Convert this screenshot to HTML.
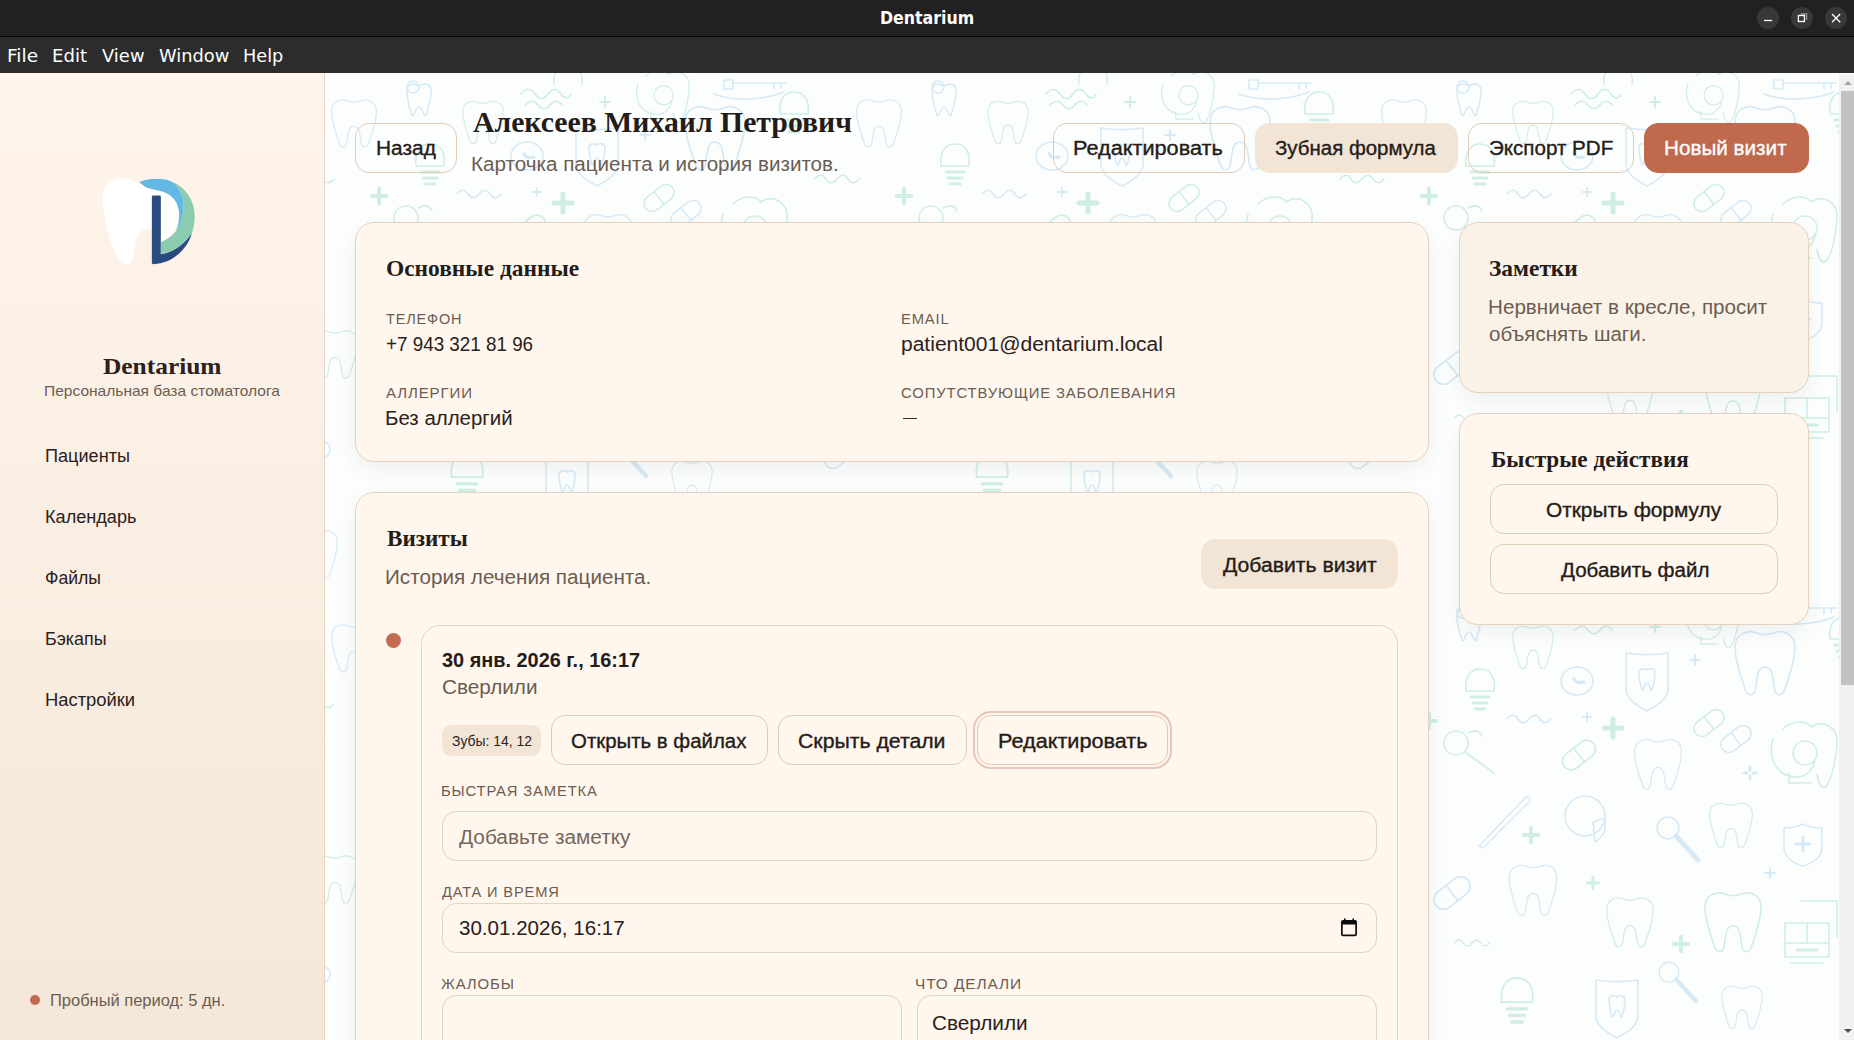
<!DOCTYPE html>
<html lang="ru">
<head>
<meta charset="utf-8">
<title>Dentarium</title>
<style>
*{box-sizing:border-box;margin:0;padding:0}
html,body{width:1854px;height:1040px;overflow:hidden;background:#fdfefe}
body{font-family:"Liberation Sans",sans-serif;color:#2a211c;position:relative}
.abs{position:absolute}
.t{position:absolute;white-space:nowrap;line-height:1;transform-origin:0 50%}
#titlebar{left:0;top:0;width:1854px;height:36px;background:#212121}
#titleline{left:0;top:36px;width:1854px;height:1px;background:#050505}
#menubar{left:0;top:37px;width:1854px;height:36px;background:#2c2c2c}
.wbtn{width:22px;height:22px;border-radius:50%;background:#383838;top:7px}
#sidebar{left:0;top:73px;width:324px;height:967px;background:linear-gradient(180deg,#fff5ec 0%,#f5e7d8 100%)}
#sideborder{left:324px;top:73px;width:1px;height:967px;background:#e6d5c2}
#main{left:325px;top:73px;width:1514px;height:967px;overflow:hidden;background:#fdfefe}
#scroll{left:1839px;top:74px;width:15px;height:966px;background:#f1f1f1}
#thumb{left:1841px;top:91px;width:13px;height:594px;background:#c1c1c1}
.card{position:absolute;background:#fff6ed;border:1px solid #e4d2bd;border-radius:19px;box-shadow:0 8px 20px rgba(60,45,30,.065)}
.btn{position:absolute;height:50px;border-radius:14px;border:1px solid #dfcbb6}
.btn.sec{background:#f3e5d6;border-color:#f3e5d6}
.btn.pri{background:#c0694c;border-color:#c0694c}
.field{position:absolute;border:1px solid #e4d3bf;border-radius:14px;background:#fff6ed}
</style>
</head>
<body>
<!-- window chrome -->
<div id="titlebar" class="abs"></div>
<div id="titleline" class="abs"></div>
<div id="menubar" class="abs"></div>
<div class="abs wbtn" style="left:1757px"></div>
<div class="abs wbtn" style="left:1791px"></div>
<div class="abs wbtn" style="left:1825px"></div>
<svg class="abs" style="left:1757px;top:7px" width="90" height="22" viewBox="0 0 90 22" fill="none" stroke="#fff" stroke-width="1.3">
<path d="M7 13.5H15.2"/>
<path d="M43.6 7H49.6V13" stroke="#9a9a9a"/>
<rect x="41.4" y="8.5" width="6" height="6"/>
<path d="M75 7L83.2 15.2M83.2 7L75 15.2"/>
</svg>

<!-- sidebar -->
<div id="sidebar" class="abs"></div>
<div id="sideborder" class="abs"></div>
<svg class="abs" style="left:90px;top:165px" width="120" height="110" viewBox="0 0 1135 1040">
<path fill="#ffffff" d="M120 320C120 200 200 128 290 128C380 128 430 160 540 215C620 245 700 250 760 290C830 340 850 430 840 500C830 600 760 690 670 730L585 730L585 620C560 600 530 600 500 610C450 640 435 720 420 800C410 880 390 940 335 940C270 940 200 760 170 620C140 480 120 400 120 320Z"/>
<path fill="#2a4a80" d="M597 288H660Q670 288 670 298V845C800 820 900 740 965 640C920 800 780 930 600 938Q585 938 585 925V300Q585 288 597 288Z"/>
<path fill="#8accb0" d="M780 160C900 210 990 330 990 480C990 560 975 620 960 650C900 740 800 820 670 845L670 730C760 690 820 640 850 560C880 480 890 400 880 330C870 260 830 200 780 160Z"/>
<path fill="#64b8e4" d="M465 160C520 140 580 130 630 130C690 130 740 140 780 160C830 200 870 260 880 330C890 400 880 480 850 560C840 590 830 610 815 625C840 560 850 480 840 430C825 340 780 290 700 255C640 235 590 230 540 215C510 200 490 180 465 160Z"/>
</svg>
<div class="abs" style="left:30px;top:995px;width:10px;height:10px;border-radius:50%;background:#c26b4f"></div>

<!-- main -->
<div id="main" class="abs"></div>
<svg id="bgpat" class="abs" style="left:325px;top:73px" width="1514" height="967" viewBox="0 1 1514 967">
<defs>
<g id="p-toothball"><path d="M-12,-8C-12,-16-5,-16,0,-13C5,-16,12,-16,12,-8C12,2,9,10,7,16C5,20,4,8,0,8C-4,8-5,20-7,16C-9,10-12,2-12,-8Z"/><circle cx="-6" cy="-12" r="6"/></g>
<g id="p-squig2"><path d="M-24,-5C-19,-11-14,-11-10,-5C-6,1-1,1,3,-5C7,-11,12,-11,16,-5C19,0,23,0,26,-4"/><path d="M-20,6C-15,1-11,1-7,6C-3,11,1,11,5,6C9,1,13,1,17,6"/></g>
<g id="p-apple"><path d="M-14,4C-16,-8-8,-14,0,-10C8,-14,16,-8,14,4"/><path d="M0,-10C0,-16,4,-19,7,-19"/></g>
<g id="p-key"><rect x="-30" y="-6" width="9" height="9"/><path d="M-21,-3H32M20,-3V3M27,-3V2"/><path d="M-40,8C-20,16,10,14,30,6"/></g>
<g id="p-tooth"><path d="M-28,-16C-28,-29-16,-32-8,-29C-3,-27,3,-27,8,-29C16,-32,28,-29,28,-16C28,-2,23,10,19,22C17,30,11,31,9,24C7,14,8,3,0,3C-8,3-7,14-9,24C-11,31-17,30-19,22C-23,10-28,-2-28,-16Z"/></g>
<g id="p-plus"><path d="M-7,0H7M0,-7V7" stroke-width="3"/></g>
<g id="p-plusb"><path d="M-9,0H9M0,-9V9" stroke-width="5"/></g>
<g id="p-pill"><g transform="rotate(-38)"><rect x="-17" y="-8" width="34" height="16" rx="8"/><path d="M0,-8V8"/></g></g>
<g id="p-circ"><ellipse cx="0" cy="0" rx="16" ry="14"/><path d="M-3,-3C-2,2,3,2,7,1" stroke-width="3"/></g>
<g id="p-circ2"><circle cx="-4" cy="-4" r="20"/><path d="M4,2L16,-2L16,10C14,18,8,20,6,22Z"/></g>
<g id="p-shield"><path d="M-21,-28C-8,-26,8,-26,21,-28V8C21,18,8,26,0,30C-8,26-21,18-21,8Z"/><path d="M-8,-8C-8,-13-3,-13,0,-11C3,-13,8,-13,8,-8C8,-2,6,6,5,9C3,11,3,2,0,2C-3,2-3,11-5,9C-6,6-8,-2-8,-8Z"/></g>
<g id="p-shieldp"><path d="M-19,-18C-8,-18,0,-22,0,-22C0,-22,8,-18,19,-18V2C19,12,8,18,0,20C-8,18-19,12-19,2Z"/><path d="M-7,-2H7M0,-9V5" stroke-width="3"/></g>
<g id="p-squig"><path d="M-22,0C-18,-5-14,-5-11,0C-8,5-4,5,0,0C4,-5,8,-5,11,0C14,5,18,5,22,0"/></g>
<g id="p-mirror"><circle cx="-12" cy="-10" r="12"/><path d="M-3,-1L26,20"/><path d="M0,-20C8,-24,12,-22,14,-17"/></g>
<g id="p-magn"><circle cx="-10" cy="-12" r="11"/><path d="M-2,-4L20,20" stroke-width="5"/></g>
<g id="p-scalpel"><path d="M-26,26L22,-24L26,-20L-22,28Z"/></g>
<g id="p-implant"><path d="M-14,2C-16,-14-8,-20,0,-20C10,-20,16,-12,14,2Z"/><path d="M-9,8H9M-7,14H7M-5,20H5" stroke-width="3"/></g>
<g id="p-flower"><path d="M-30,-10C-36,10-26,28-6,28C4,28,10,20,12,12"/><path d="M-20,-20C-10,-30,4,-28,8,-22C20,-30,36,-22,34,-4C32,16,28,30,24,36C20,42,16,36,14,26"/><circle cx="2" cy="4" r="12"/><path d="M-14,34H8M-14,24V34"/></g>
<g id="p-spark"><path d="M0,-6V-3M0,3V6M-6,0H-3M3,0H6" stroke-width="3"/></g>
<g id="p-machine"><rect x="-22" y="-20" width="44" height="34"/><path d="M-22,0H22M0,-20V0M-16,20H16" /><path d="M-10,7H10" stroke-width="3"/><path d="M-6,-42H30V-6"/></g>

<pattern id="dental" width="525" height="525" patternUnits="userSpaceOnUse">
<g fill="none" stroke-width="1.6" stroke-linecap="round" stroke-linejoin="round">
<use href="#p-tooth" transform="translate(158,51) scale(0.72)" stroke="#d0eee6"/>
<use href="#p-tooth" transform="translate(158,576) scale(0.72)" stroke="#d0eee6"/>
<use href="#p-tooth" transform="translate(390,67) scale(1.07)" stroke="#d6eaf6"/>
<use href="#p-implant" transform="translate(105,92) scale(1.0)" stroke="#d0eee6"/>
<use href="#p-circ" transform="translate(202,84) scale(1.0)" stroke="#d6eaf6"/>
<use href="#p-shield" transform="translate(272,84) scale(1.0)" stroke="#d6eaf6"/>
<use href="#p-plus" transform="translate(320,63) scale(0.7)" stroke="#d6eaf6"/>
<use href="#p-plusb" transform="translate(238,131) scale(1.0)" stroke="#d0eee6"/>
<use href="#p-plus" transform="translate(212,120) scale(0.6)" stroke="#d6eaf6"/>
<use href="#p-pill" transform="translate(334,126) scale(1.0)" stroke="#d0eee6"/>
<use href="#p-pill" transform="translate(361,142) scale(1.0)" stroke="#d6eaf6"/>
<use href="#p-squig" transform="translate(154,122) scale(1.0)" stroke="#d6eaf6"/>
<use href="#p-mirror" transform="translate(93,156) scale(1.0)" stroke="#d0eee6"/>
<use href="#p-pill" transform="translate(204,158) scale(1.1)" stroke="#d0eee6"/>
<use href="#p-tooth" transform="translate(283,168) scale(0.84)" stroke="#d6eaf6"/>
<use href="#p-flower" transform="translate(428,152) scale(1.0)" stroke="#d0eee6"/>
<use href="#p-spark" transform="translate(375,176) scale(1.0)" stroke="#d6eaf6"/>
<use href="#p-scalpel" transform="translate(130,223) scale(1.0)" stroke="#d6eaf6"/>
<use href="#p-circ2" transform="translate(214,223) scale(1.0)" stroke="#d6eaf6"/>
<use href="#p-magn" transform="translate(303,243) scale(1.0)" stroke="#d6eaf6"/>
<use href="#p-tooth" transform="translate(356,229) scale(0.76)" stroke="#d0eee6"/>
<use href="#p-shieldp" transform="translate(428,249) scale(1.0)" stroke="#d6eaf6"/>
<use href="#p-plusb" transform="translate(156,238) scale(0.8)" stroke="#d0eee6"/>
<use href="#p-tooth" transform="translate(158,294) scale(0.85)" stroke="#d6eaf6"/>
<use href="#p-tooth" transform="translate(255,326) scale(0.83)" stroke="#d0eee6"/>
<use href="#p-tooth" transform="translate(358,326) scale(1.0)" stroke="#d0eee6"/>
<use href="#p-plusb" transform="translate(306,347) scale(0.8)" stroke="#d0eee6"/>
<use href="#p-plus" transform="translate(395,276) scale(0.7)" stroke="#d6eaf6"/>
<use href="#p-plusb" transform="translate(218,286) scale(0.6)" stroke="#d0eee6"/>
<use href="#p-machine" transform="translate(432,346) scale(1.0)" stroke="#d0eee6"/>
<use href="#p-implant" transform="translate(142,403) scale(1.1)" stroke="#d0eee6"/>
<use href="#p-shield" transform="translate(242,411) scale(1.0)" stroke="#d6eaf6"/>
<use href="#p-tooth" transform="translate(367,411) scale(0.72)" stroke="#d6eaf6"/>
<use href="#p-magn" transform="translate(303,386) scale(0.9)" stroke="#d6eaf6"/>
<use href="#p-squig" transform="translate(97,346) scale(0.8)" stroke="#d0eee6"/>
<use href="#p-pill" transform="translate(77,296) scale(1.2)" stroke="#d6eaf6"/>
<use href="#p-toothball" transform="translate(94,27) scale(1.0)" stroke="#d6eaf6"/>
<use href="#p-toothball" transform="translate(94,552) scale(1.0)" stroke="#d6eaf6"/>
<use href="#p-tooth" transform="translate(29,52) scale(0.8)" stroke="#d6eaf6"/>
<use href="#p-tooth" transform="translate(29,577) scale(0.8)" stroke="#d6eaf6"/>
<use href="#p-tooth" transform="translate(554,52) scale(0.8)" stroke="#d6eaf6"/>
<use href="#p-tooth" transform="translate(554,577) scale(0.8)" stroke="#d6eaf6"/>
<use href="#p-squig2" transform="translate(220,27) scale(1.0)" stroke="#d0eee6"/>
<use href="#p-squig2" transform="translate(220,552) scale(1.0)" stroke="#d0eee6"/>
<use href="#p-plus" transform="translate(280,30) scale(0.7)" stroke="#d0eee6"/>
<use href="#p-plus" transform="translate(280,555) scale(0.7)" stroke="#d0eee6"/>
<use href="#p-apple" transform="translate(243,8) scale(1.0)" stroke="#d6eaf6"/>
<use href="#p-apple" transform="translate(243,533) scale(1.0)" stroke="#d6eaf6"/>
<use href="#p-flower" transform="translate(337,20) scale(0.8)" stroke="#d0eee6"/>
<use href="#p-flower" transform="translate(337,545) scale(0.8)" stroke="#d0eee6"/>
<use href="#p-key" transform="translate(429,14) scale(1.0)" stroke="#d6eaf6"/>
<use href="#p-key" transform="translate(429,539) scale(1.0)" stroke="#d6eaf6"/>
<use href="#p-plusb" transform="translate(54,124) scale(0.8)" stroke="#d0eee6"/>
<use href="#p-plusb" transform="translate(579,124) scale(0.8)" stroke="#d0eee6"/>
<use href="#p-squig" transform="translate(-13,107) scale(1.0)" stroke="#d0eee6"/>
<use href="#p-squig" transform="translate(512,107) scale(1.0)" stroke="#d0eee6"/>
<use href="#p-implant" transform="translate(-56,40) scale(1.0)" stroke="#d0eee6"/>
<use href="#p-implant" transform="translate(-56,565) scale(1.0)" stroke="#d0eee6"/>
<use href="#p-implant" transform="translate(469,40) scale(1.0)" stroke="#d0eee6"/>
<use href="#p-implant" transform="translate(469,565) scale(1.0)" stroke="#d0eee6"/>
<use href="#p-tooth" transform="translate(185,-37) scale(0.8)" stroke="#d6eaf6"/>
<use href="#p-tooth" transform="translate(185,488) scale(0.8)" stroke="#d6eaf6"/>
<use href="#p-plusb" transform="translate(265,-47) scale(0.8)" stroke="#d0eee6"/>
<use href="#p-plusb" transform="translate(265,478) scale(0.8)" stroke="#d0eee6"/>
<use href="#p-pill" transform="translate(400,-42) scale(1.0)" stroke="#d6eaf6"/>
<use href="#p-pill" transform="translate(400,483) scale(1.0)" stroke="#d6eaf6"/>
<use href="#p-plusb" transform="translate(-20,193) scale(0.8)" stroke="#d0eee6"/>
<use href="#p-plusb" transform="translate(505,193) scale(0.8)" stroke="#d0eee6"/>
<use href="#p-tooth" transform="translate(10,283) scale(0.8)" stroke="#d0eee6"/>
<use href="#p-tooth" transform="translate(535,283) scale(0.8)" stroke="#d0eee6"/>
<use href="#p-pill" transform="translate(-10,383) scale(1.0)" stroke="#d6eaf6"/>
<use href="#p-pill" transform="translate(515,383) scale(1.0)" stroke="#d6eaf6"/>
<use href="#p-tooth" transform="translate(-10,-42) scale(0.8)" stroke="#d6eaf6"/>
<use href="#p-tooth" transform="translate(-10,483) scale(0.8)" stroke="#d6eaf6"/>
<use href="#p-tooth" transform="translate(515,-42) scale(0.8)" stroke="#d6eaf6"/>
<use href="#p-tooth" transform="translate(515,483) scale(0.8)" stroke="#d6eaf6"/>
</g>
</pattern></defs>
<rect width="1514" height="968" fill="#fcfefe"/>
<rect width="1514" height="968" fill="url(#dental)"/>
</svg>
<div id="scroll" class="abs"></div>
<div id="thumb" class="abs"></div>
<svg class="abs" style="left:1839px;top:74px" width="15" height="966" viewBox="0 0 15 966">
<path d="M5 11L9 7L13 11Z" fill="#a3a3a3"/>
<path d="M5 955L9 959L13 955Z" fill="#505050"/>
</svg>

<!-- header buttons -->
<div class="btn" style="left:355px;top:123px;width:102px"></div>
<div class="btn" style="left:1053px;top:123px;width:192px"></div>
<div class="btn sec" style="left:1255px;top:123px;width:203px"></div>
<div class="btn" style="left:1468px;top:123px;width:166px"></div>
<div class="btn pri" style="left:1644px;top:123px;width:165px"></div>

<!-- card: main data -->
<div class="card" style="left:355px;top:222px;width:1074px;height:240px"></div>
<div class="abs" style="left:903px;top:418px;width:14px;height:1px;background:#3a302a"></div>

<!-- card: notes -->
<div class="card" style="left:1459px;top:222px;width:350px;height:171px;background:#fbf2e7"></div>

<!-- card: quick actions -->
<div class="card" style="left:1459px;top:413px;width:350px;height:212px"></div>
<div class="btn" style="left:1490px;top:484px;width:288px"></div>
<div class="btn" style="left:1490px;top:544px;width:288px"></div>

<!-- card: visits -->
<div class="card" style="left:355px;top:492px;width:1074px;height:600px"></div>
<div class="btn sec" style="left:1201px;top:539px;width:197px"></div>
<div class="abs" style="left:386px;top:633px;width:15px;height:15px;border-radius:50%;background:#c26b4f"></div>
<div class="field" style="left:421px;top:625px;width:977px;height:500px;border-radius:19px"></div>
<div class="abs" style="left:442px;top:725px;width:99px;height:31px;border-radius:9px;background:#f3e5d6"></div>
<div class="btn" style="left:551px;top:715px;width:217px"></div>
<div class="btn" style="left:778px;top:715px;width:189px"></div>
<div class="btn" style="left:977px;top:715px;width:191px;outline:2px solid #e9c5b7;outline-offset:2px"></div>
<div class="field" style="left:442px;top:811px;width:935px;height:50px"></div>
<div class="field" style="left:442px;top:903px;width:935px;height:50px"></div>
<svg class="abs" style="left:1341px;top:918px" width="16" height="19" viewBox="0 0 16 19"><path fill="#0c0c0c" fill-rule="evenodd" d="M3 0.5H4.6V2H11.4V0.5H13V2H14Q16 2 16 4V16.3Q16 18.3 14 18.3H2Q0 18.3 0 16.3V4Q0 2 2 2H3ZM1.7 6.4V16.6H14.3V6.4Z"/></svg>
<div class="field" style="left:442px;top:995px;width:460px;height:80px"></div>
<div class="field" style="left:917px;top:995px;width:460px;height:80px"></div>

<!-- texts -->
<div class="t" style="left:880.04px;top:9.80px;font-family:'DejaVu Sans',sans-serif;font-weight:700;font-size:17.0px;color:#ffffff;transform:scaleX(0.9286)">Dentarium</div>
<div class="t" style="left:6.86px;top:46.80px;font-family:'DejaVu Sans',sans-serif;font-weight:400;font-size:18.2px;color:#ffffff;transform:scaleX(1.0214)">File</div>
<div class="t" style="left:51.91px;top:46.80px;font-family:'DejaVu Sans',sans-serif;font-weight:400;font-size:18.2px;color:#ffffff;transform:scaleX(0.9939)">Edit</div>
<div class="t" style="left:102.40px;top:46.80px;font-family:'DejaVu Sans',sans-serif;font-weight:400;font-size:18.2px;color:#ffffff;transform:scaleX(0.9857)">View</div>
<div class="t" style="left:159.22px;top:46.80px;font-family:'DejaVu Sans',sans-serif;font-weight:400;font-size:18.2px;color:#ffffff;transform:scaleX(0.9800)">Window</div>
<div class="t" style="left:243.16px;top:46.80px;font-family:'DejaVu Sans',sans-serif;font-weight:400;font-size:18.2px;color:#ffffff;transform:scaleX(0.9718)">Help</div>
<div class="t" style="left:103.20px;top:355.10px;font-family:'Liberation Serif',serif;font-weight:700;font-size:23.5px;color:#2a211c;transform:scaleX(1.0807)">Dentarium</div>
<div class="t" style="left:43.61px;top:383.90px;font-family:'Liberation Sans',sans-serif;font-weight:400;font-size:14.3px;color:#6b5d52;transform:scaleX(1.0866)">Персональная база стоматолога</div>
<div class="t" style="left:45.47px;top:448.20px;font-family:'Liberation Sans',sans-serif;font-weight:400;font-size:17.5px;color:#2a211c;transform:scaleX(1.0350)">Пациенты</div>
<div class="t" style="left:45.26px;top:509.20px;font-family:'Liberation Sans',sans-serif;font-weight:400;font-size:17.5px;color:#2a211c;transform:scaleX(1.0356)">Календарь</div>
<div class="t" style="left:45.19px;top:570.20px;font-family:'Liberation Sans',sans-serif;font-weight:400;font-size:17.5px;color:#2a211c;transform:scaleX(1.0057)">Файлы</div>
<div class="t" style="left:45.28px;top:631.20px;font-family:'Liberation Sans',sans-serif;font-weight:400;font-size:17.5px;color:#2a211c;transform:scaleX(1.0207)">Бэкапы</div>
<div class="t" style="left:45.25px;top:692.20px;font-family:'Liberation Sans',sans-serif;font-weight:400;font-size:17.5px;color:#2a211c;transform:scaleX(1.0500)">Настройки</div>
<div class="t" style="left:49.57px;top:992.80px;font-family:'Liberation Sans',sans-serif;font-weight:400;font-size:16px;color:#6b5d52;transform:scaleX(1.0292)">Пробный период: 5 дн.</div>
<div class="t" style="left:375.56px;top:137.80px;font-family:'Liberation Sans',sans-serif;font-weight:400;font-size:20px;color:#241c18;-webkit-text-stroke:.35px #241c18;transform:scaleX(1.0446)">Назад</div>
<div class="t" style="left:472.60px;top:107.50px;font-family:'Liberation Serif',serif;font-weight:700;font-size:29.6px;color:#241c18;transform:scaleX(1.0050)">Алексеев Михаил Петрович</div>
<div class="t" style="left:470.54px;top:153.80px;font-family:'Liberation Sans',sans-serif;font-weight:400;font-size:20px;color:#6b5d52;transform:scaleX(1.0309)">Карточка пациента и история визитов.</div>
<div class="t" style="left:1073.42px;top:137.80px;font-family:'Liberation Sans',sans-serif;font-weight:400;font-size:20px;color:#241c18;-webkit-text-stroke:.35px #241c18;transform:scaleX(1.0839)">Редактировать</div>
<div class="t" style="left:1275.48px;top:137.80px;font-family:'Liberation Sans',sans-serif;font-weight:400;font-size:20px;color:#241c18;-webkit-text-stroke:.35px #241c18;transform:scaleX(1.0223)">Зубная формула</div>
<div class="t" style="left:1488.97px;top:137.80px;font-family:'Liberation Sans',sans-serif;font-weight:400;font-size:20px;color:#241c18;-webkit-text-stroke:.35px #241c18;transform:scaleX(1.0294)">Экспорт PDF</div>
<div class="t" style="left:1664.47px;top:137.80px;font-family:'Liberation Sans',sans-serif;font-weight:400;font-size:20px;color:#ffffff;-webkit-text-stroke:.35px #ffffff;transform:scaleX(1.0339)">Новый визит</div>
<div class="t" style="left:385.58px;top:257.20px;font-family:'Liberation Serif',serif;font-weight:700;font-size:23px;color:#241c18;transform:scaleX(1.0181)">Основные данные</div>
<div class="t" style="left:385.70px;top:310.60px;font-family:'Liberation Sans',sans-serif;font-weight:400;font-size:15.4px;color:#6b5d52;letter-spacing:.9px;transform:scaleX(0.9418)">ТЕЛЕФОН</div>
<div class="t" style="left:385.66px;top:334.00px;font-family:'Liberation Sans',sans-serif;font-weight:400;font-size:20px;color:#2a211c;transform:scaleX(0.9413)">+7 943 321 81 96</div>
<div class="t" style="left:900.64px;top:310.60px;font-family:'Liberation Sans',sans-serif;font-weight:400;font-size:15.4px;color:#6b5d52;letter-spacing:.9px;transform:scaleX(0.9583)">EMAIL</div>
<div class="t" style="left:901.45px;top:334.00px;font-family:'Liberation Sans',sans-serif;font-weight:400;font-size:20px;color:#2a211c;transform:scaleX(1.0506)">patient001@dentarium.local</div>
<div class="t" style="left:385.70px;top:385.00px;font-family:'Liberation Sans',sans-serif;font-weight:400;font-size:15.4px;color:#6b5d52;letter-spacing:.9px;transform:scaleX(0.9759)">АЛЛЕРГИИ</div>
<div class="t" style="left:385.16px;top:408.00px;font-family:'Liberation Sans',sans-serif;font-weight:400;font-size:20px;color:#2a211c;transform:scaleX(1.0221)">Без аллергий</div>
<div class="t" style="left:900.64px;top:385.00px;font-family:'Liberation Sans',sans-serif;font-weight:400;font-size:15.4px;color:#6b5d52;letter-spacing:.9px;transform:scaleX(0.9645)">СОПУТСТВУЮЩИЕ ЗАБОЛЕВАНИЯ</div>
<div class="t" style="left:1489.48px;top:257.20px;font-family:'Liberation Serif',serif;font-weight:700;font-size:23px;color:#241c18;transform:scaleX(1.0174)">Заметки</div>
<div class="t" style="left:1488.44px;top:296.80px;font-family:'Liberation Sans',sans-serif;font-weight:400;font-size:20px;color:#6b5d52;transform:scaleX(1.0317)">Нервничает в кресле, просит</div>
<div class="t" style="left:1489.47px;top:323.90px;font-family:'Liberation Sans',sans-serif;font-weight:400;font-size:20px;color:#6b5d52;transform:scaleX(1.0265)">объяснять шаги.</div>
<div class="t" style="left:1490.50px;top:448.20px;font-family:'Liberation Serif',serif;font-weight:700;font-size:23px;color:#241c18;transform:scaleX(1.0077)">Быстрые действия</div>
<div class="t" style="left:1545.96px;top:499.70px;font-family:'Liberation Sans',sans-serif;font-weight:400;font-size:20px;color:#241c18;-webkit-text-stroke:.35px #241c18;transform:scaleX(1.0419)">Открыть формулу</div>
<div class="t" style="left:1560.50px;top:559.70px;font-family:'Liberation Sans',sans-serif;font-weight:400;font-size:20px;color:#241c18;-webkit-text-stroke:.35px #241c18;transform:scaleX(1.0280)">Добавить файл</div>
<div class="t" style="left:386.70px;top:527.20px;font-family:'Liberation Serif',serif;font-weight:700;font-size:23px;color:#241c18;transform:scaleX(1.0050)">Визиты</div>
<div class="t" style="left:384.63px;top:566.80px;font-family:'Liberation Sans',sans-serif;font-weight:400;font-size:20px;color:#6b5d52;transform:scaleX(1.0331)">История лечения пациента.</div>
<div class="t" style="left:1223.00px;top:554.70px;font-family:'Liberation Sans',sans-serif;font-weight:400;font-size:20px;color:#241c18;-webkit-text-stroke:.35px #241c18;transform:scaleX(1.0586)">Добавить визит</div>
<div class="t" style="left:441.61px;top:650.00px;font-family:'Liberation Sans',sans-serif;font-weight:700;font-size:20px;color:#241c18;transform:scaleX(0.9944)">30 янв. 2026 г., 16:17</div>
<div class="t" style="left:441.56px;top:677.00px;font-family:'Liberation Sans',sans-serif;font-weight:400;font-size:20px;color:#6b5d52;transform:scaleX(1.0378)">Сверлили</div>
<div class="t" style="left:451.67px;top:733.00px;font-family:'Liberation Sans',sans-serif;font-weight:400;font-size:15px;color:#2a211c;transform:scaleX(0.9274)">Зубы: 14, 12</div>
<div class="t" style="left:571.48px;top:730.60px;font-family:'Liberation Sans',sans-serif;font-weight:400;font-size:20px;color:#241c18;-webkit-text-stroke:.35px #241c18;transform:scaleX(1.0205)">Открыть в файлах</div>
<div class="t" style="left:798.44px;top:730.60px;font-family:'Liberation Sans',sans-serif;font-weight:400;font-size:20px;color:#241c18;-webkit-text-stroke:.35px #241c18;transform:scaleX(1.0620)">Скрыть детали</div>
<div class="t" style="left:997.62px;top:730.60px;font-family:'Liberation Sans',sans-serif;font-weight:400;font-size:20px;color:#241c18;-webkit-text-stroke:.35px #241c18;transform:scaleX(1.0825)">Редактировать</div>
<div class="t" style="left:440.74px;top:783.00px;font-family:'Liberation Sans',sans-serif;font-weight:400;font-size:15.4px;color:#6b5d52;letter-spacing:.9px;transform:scaleX(0.9590)">БЫСТРАЯ ЗАМЕТКА</div>
<div class="t" style="left:459.20px;top:827.00px;font-family:'Liberation Sans',sans-serif;font-weight:400;font-size:20px;color:#75675c;transform:scaleX(1.0412)">Добавьте заметку</div>
<div class="t" style="left:441.70px;top:884.00px;font-family:'Liberation Sans',sans-serif;font-weight:400;font-size:15.4px;color:#6b5d52;letter-spacing:.9px;transform:scaleX(0.9500)">ДАТА И ВРЕМЯ</div>
<div class="t" style="left:458.57px;top:918.00px;font-family:'Liberation Sans',sans-serif;font-weight:400;font-size:20px;color:#2a211c;transform:scaleX(1.0277)">30.01.2026, 16:17</div>
<div class="t" style="left:440.73px;top:976.00px;font-family:'Liberation Sans',sans-serif;font-weight:400;font-size:15.4px;color:#6b5d52;letter-spacing:.9px;transform:scaleX(0.9712)">ЖАЛОБЫ</div>
<div class="t" style="left:915.40px;top:976.00px;font-family:'Liberation Sans',sans-serif;font-weight:400;font-size:15.4px;color:#6b5d52;letter-spacing:.9px;transform:scaleX(1.0019)">ЧТО ДЕЛАЛИ</div>
<div class="t" style="left:931.96px;top:1013.00px;font-family:'Liberation Sans',sans-serif;font-weight:400;font-size:20px;color:#2a211c;transform:scaleX(1.0389)">Сверлили</div>
</body>
</html>
